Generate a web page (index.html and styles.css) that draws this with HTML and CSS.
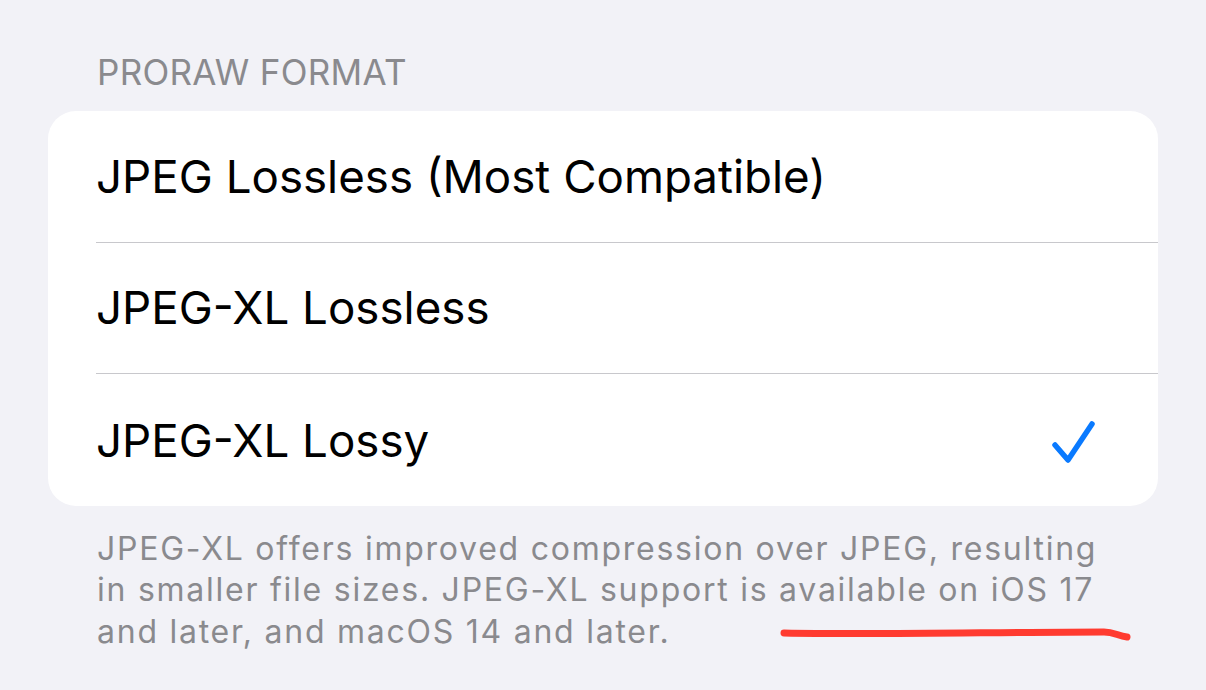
FILE: index.html
```html
<!DOCTYPE html>
<html>
<head>
<meta charset="utf-8">
<link rel="stylesheet" href="styles.css">
</head>
<body>
<div class="page">
  <div class="section-header">PRORAW FORMAT</div>
  <div class="card">
    <div class="row"><span class="label">JPEG Lossless (Most Compatible)</span></div>
    <div class="row"><span class="label">JPEG-XL Lossless</span></div>
    <div class="row"><span class="label">JPEG-XL Lossy</span>
      <svg class="check" width="46" height="44" viewBox="0 0 46 44"><path d="M5 25 L18 40 L42 4" fill="none" stroke="#0a7aff" stroke-width="5.5" stroke-linecap="round" stroke-linejoin="round"/></svg>
    </div>
  </div>
  <div class="footer">JPEG-XL offers improved compression over JPEG, resulting in smaller file sizes. JPEG-XL support is available on iOS 17 and later, and macOS 14 and later.</div>
  <svg class="mark" width="360" height="24" viewBox="0 0 360 24"><path d="M6 11 C 100 13, 220 10, 326 10 C 336 10, 340 14, 349 15" fill="none" stroke="#ff3b30" stroke-width="7" stroke-linecap="round"/></svg>
</div>
</body>
</html>
```
FILE: styles.css
```css
html, body { margin: 0; padding: 0; }
body { background: #f2f2f7; font-family: Inter, "Liberation Sans", sans-serif; width: 1206px; height: 690px; overflow: hidden; }
.page { position: relative; padding: 0 48px; }
.section-header { padding: 52px 0 0 49px; height: 111px; box-sizing: border-box; font-size: 35px; line-height: 40px; color: #8a8a8e; letter-spacing: 0.3px; }
.card { background: #fff; border-radius: 28px; overflow: hidden; }
.row { height: 131.67px; display: flex; align-items: center; justify-content: space-between; margin-left: 48px; padding-right: 62px; border-bottom: 1px solid #c8c8cc; box-sizing: border-box; }
.row:last-child { border-bottom: none; }
.label { font-size: 45.7px; color: #000; }
.check { margin-top: 4px; }
.footer { padding: 22px 50px 0 49px; font-size: 32px; line-height: 41.5px; color: #8a8a8e; letter-spacing: 1.75px; }
.mark { position: absolute; left: 778px; top: 622px; }
```
